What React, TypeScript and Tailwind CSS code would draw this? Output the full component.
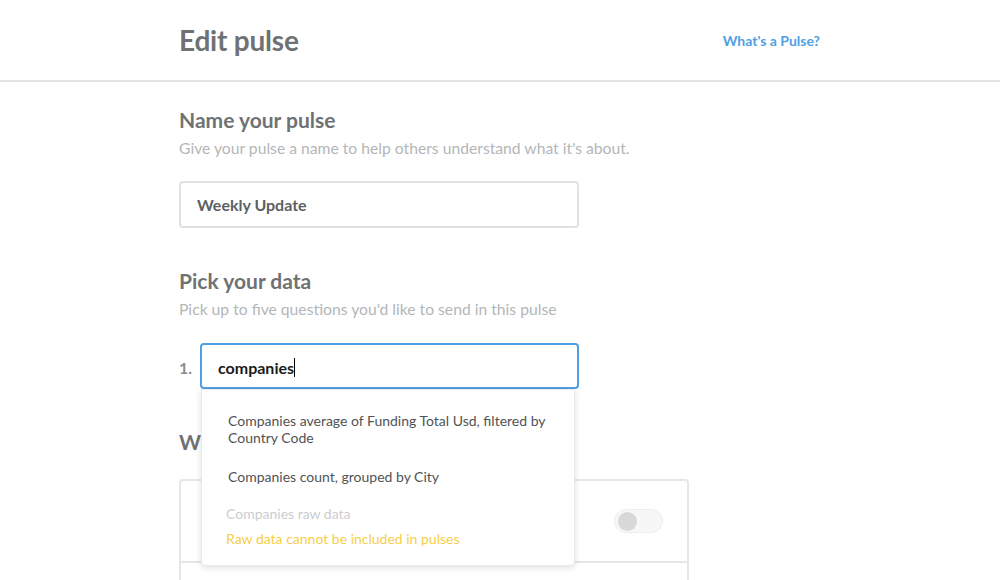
import { useState } from "react";

const font = { fontFamily: "Lato, 'Open Sans', sans-serif" };

function Toggle({ on }: { on: boolean }) {
  return (
    <div
      className={`w-[49px] h-[24px] rounded-full border flex items-center px-[3px] ${
        on ? "bg-[#509EE3] border-[#509EE3] justify-end" : "bg-[#f7f7f7] border-[#ededed] justify-start"
      }`}
    >
      <div className={`w-[19px] h-[19px] rounded-full ${on ? "bg-white" : "bg-[#d8d8d8]"}`} />
    </div>
  );
}

export default function App() {
  const [query, setQuery] = useState("companies");

  const results = [
    { name: "Companies average of Funding Total Usd, filtered by Country Code", raw: false },
    { name: "Companies count, grouped by City", raw: false },
    { name: "Companies raw data", raw: true },
  ];

  return (
    <main className="min-h-screen bg-white text-[#6f7274]" style={font}>
      {/* Header */}
      <header className="border-b-2 border-[#e4e4e4]">
        <div className="mx-auto w-[642px] h-[80px] flex items-center justify-between">
          <h1 className="text-[28px] font-bold tracking-[-0.2px]">Edit pulse</h1>
          <a href="#" className="text-[14px] font-bold text-[#509EE3] mr-[1px]">
            What's a Pulse?
          </a>
        </div>
      </header>

      <div className="mx-auto w-[642px] pt-[25px]">
        {/* Name */}
        <section>
          <h2 className="text-[21px] leading-[26px] font-bold">Name your pulse</h2>
          <p className="mt-[5px] text-[15.7px] leading-[20px] text-[#b3b6b9]">
            Give your pulse a name to help others understand what it's about.
          </p>
          <input
            className="mt-[23px] w-[400px] h-[47px] border-2 border-[#e1e1e1] rounded-[4px] px-[16px] text-[16px] font-bold text-[#5d6063] outline-none"
            defaultValue="Weekly Update"
          />
        </section>

        {/* Pick data */}
        <section className="mt-[40px]">
          <h2 className="text-[21px] leading-[26px] font-bold">Pick your data</h2>
          <p className="mt-[5px] text-[15.7px] leading-[20px] text-[#b3b6b9]">
            Pick up to five questions you'd like to send in this pulse
          </p>
          <div className="mt-[24px] flex items-center">
            <span className="w-[21px] text-[16px] font-bold text-[#8b8e91] pt-[3px]">1.</span>
            <div className="relative">
              <div className="w-[379px] h-[46px] border-2 border-[#509EE3] rounded-[4px] px-[16px] pt-[3px] flex items-center">
                <span className="text-[16px] font-bold text-[#1b1b1b]">{query}</span>
                <span className="w-[1px] h-[19px] bg-black" />
                <input
                  className="hidden"
                  value={query}
                  onChange={(e) => setQuery(e.target.value)}
                />
              </div>
              {/* Dropdown */}
              <div className="absolute z-10 left-[1px] top-[46px] w-[374px] bg-white rounded-b-[4px] border border-[#eaeaea] shadow-[0_2px_6px_rgba(0,0,0,0.12)] pt-[11px] pb-[5px]">
                {results.map((r) =>
                  r.raw ? (
                    <div key={r.name} className="pl-[24px] pr-[14px] pt-[9px] pb-[13px]">
                      <div className="text-[14px] leading-[17px] text-[#cbcdcf]">{r.name}</div>
                      <div className="mt-[8px] text-[14px] leading-[17px] text-[#F7CE4A]">
                        Raw data cannot be included in pulses
                      </div>
                    </div>
                  ) : (
                    <div key={r.name} className="pl-[26px] pr-[14px] py-[11px] text-[14px] leading-[17px] text-[#505356]">
                      {r.name}
                    </div>
                  )
                )}
              </div>
            </div>
          </div>
        </section>

        {/* Where */}
        <section className="mt-[40px]">
          <h2 className="text-[21px] leading-[26px] font-bold">Where should this data go?</h2>
          <div className="mt-[24px] w-[510px] border-2 border-[#e6e6e6] rounded-[4px]">
            <div className="h-[82px] flex items-center justify-between px-[24px] border-b-2 border-[#e6e6e6]">
              <span className="text-[16px] font-bold">Email it</span>
              <Toggle on={false} />
            </div>
            <div className="h-[82px] flex items-center justify-between px-[24px]">
              <span className="text-[16px] font-bold">Slack it</span>
              <Toggle on={false} />
            </div>
          </div>
        </section>
      </div>
    </main>
  );
}
